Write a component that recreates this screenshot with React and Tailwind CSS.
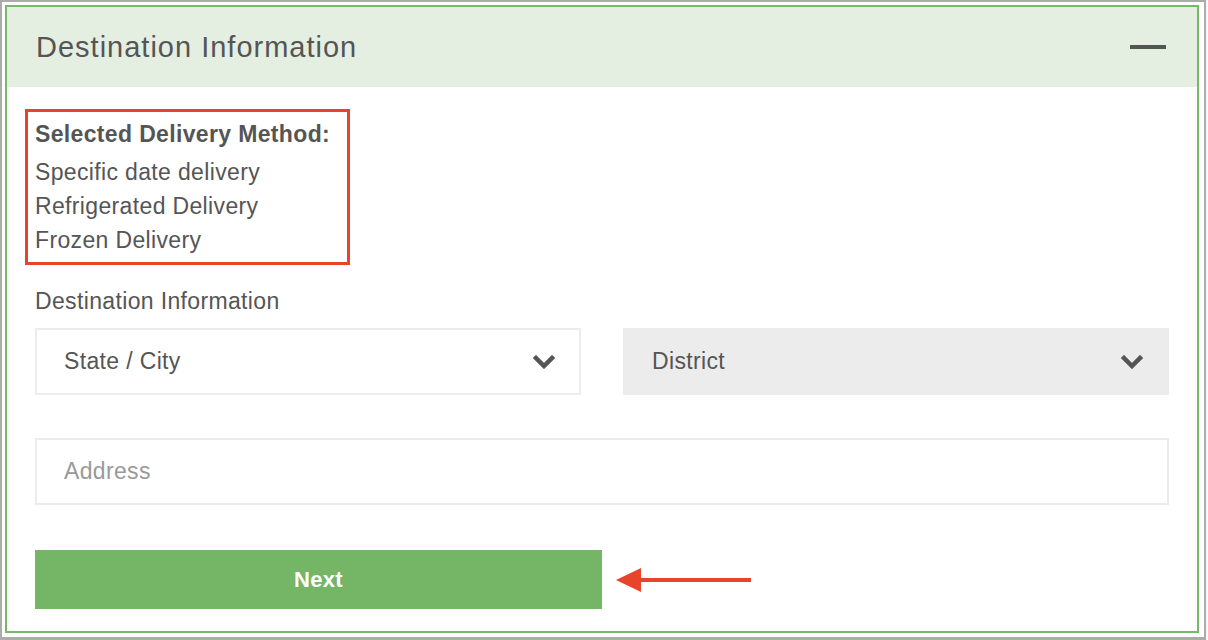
import React from 'react';

const font = { fontFamily: '"Liberation Sans", Arial, sans-serif' };

const Chevron = () => (
  <svg width="22" height="14" viewBox="0 0 22 14" className="shrink-0">
    <polyline points="3,3 11,11 19,3" fill="none" stroke="#555" strokeWidth="4.5" strokeLinecap="square" />
  </svg>
);

const Arrow = () => (
  <svg width="136" height="28" viewBox="0 0 136 28" className="ml-[14px] shrink-0">
    <polygon points="0,14 25,2 25,26" fill="#e8442b" />
    <rect x="22" y="12" width="113" height="4" fill="#e8442b" />
  </svg>
);

const App = () => {
  return (
    <div className="w-full h-[640px] bg-[#f7f7f9]" style={font}>
      <div className="w-[1206px] h-[640px] bg-white border-2 border-b-[3px] border-[#ababab] pt-[3px] pl-[3px] pr-[5px] pb-[4px]">
        <div className="h-full border-2 border-[#77b86a] flex flex-col bg-white">
          {/* header */}
          <div className="h-[80px] shrink-0 bg-[#e4efe2] flex items-center justify-between pl-[29px] pr-[31px]">
            <h2 className="text-[29px] tracking-[1px] text-[#555] mt-[1px]">Destination Information</h2>
            <div className="w-[36px] h-[4px] bg-[#555]" />
          </div>

          {/* body */}
          <div className="flex-1 px-[28px] pt-[30px] text-[#555] text-[23px] tracking-[0.35px]">
            <div className="relative">
              <div className="absolute -top-[8px] -bottom-[8px] -left-[10px] w-[325px] border-[3px] border-[#e8442b]" />
              <p className="font-bold leading-[34px] mb-[4px]">Selected Delivery Method:</p>
              <p className="leading-[34px]">Specific date delivery</p>
              <p className="leading-[34px]">Refrigerated Delivery</p>
              <p className="leading-[34px]">Frozen Delivery</p>
            </div>

            <p className="leading-[34px] mt-[27px]">Destination Information</p>

            <div className="grid grid-cols-2 gap-[42px] mt-[10px]">
              <div className="h-[67px] border-2 border-[#ececec] bg-white flex items-center justify-between pl-[27px] pr-[24px]">
                <span>State / City</span>
                <Chevron />
              </div>
              <div className="h-[67px] border-2 border-[#ececec] bg-[#ececec] flex items-center justify-between pl-[27px] pr-[24px]">
                <span>District</span>
                <Chevron />
              </div>
            </div>

            <div className="h-[67px] mt-[43px] border-2 border-[#ececec] flex items-center pl-[27px] text-[#999]">
              Address
            </div>

            <div className="flex items-center mt-[45px]">
              <button className="w-[567px] h-[59px] bg-[#74b566] text-white font-bold text-[22px] tracking-[0.3px]">
                Next
              </button>
              <Arrow />
            </div>
          </div>
        </div>
      </div>
    </div>
  );
};

export default App;
